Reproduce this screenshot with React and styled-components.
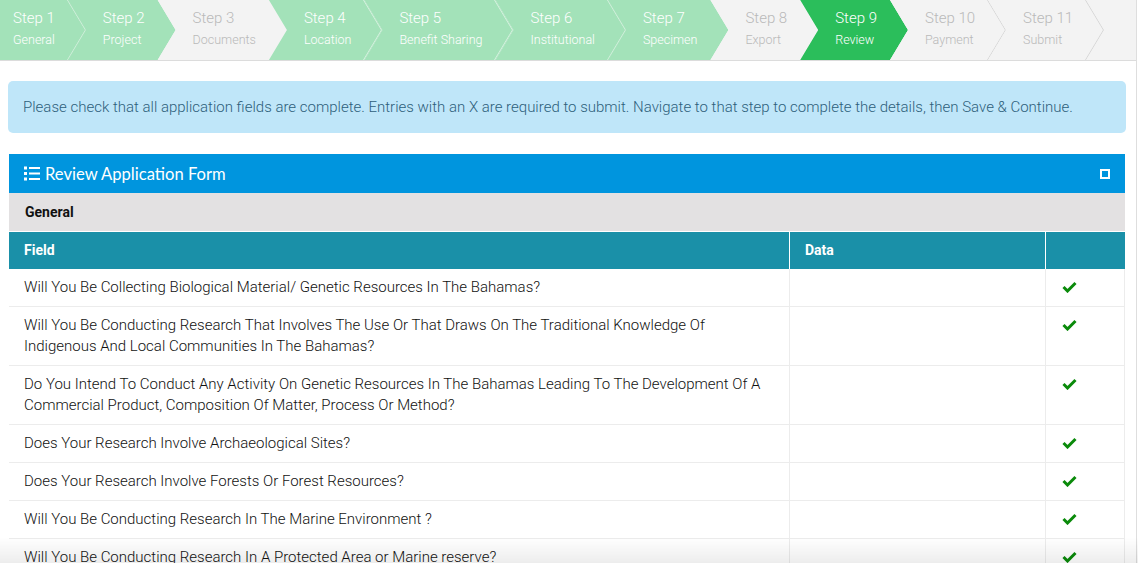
import React from "react";
import styled, { createGlobalStyle } from "styled-components";

const GlobalStyle = createGlobalStyle`
  html, body {
    margin: 0;
    padding: 0;
    background: #fff;
    font-family: Roboto, "Liberation Sans", Arial, sans-serif;
    overflow: hidden;
  }
  * { box-sizing: border-box; }
`;

const steps = [
  { title: "Step 1", label: "General", state: "done" },
  { title: "Step 2", label: "Project", state: "done" },
  { title: "Step 3", label: "Documents", state: "todo" },
  { title: "Step 4", label: "Location", state: "done" },
  { title: "Step 5", label: "Benefit Sharing", state: "done" },
  { title: "Step 6", label: "Institutional", state: "done" },
  { title: "Step 7", label: "Specimen", state: "done" },
  { title: "Step 8", label: "Export", state: "todo" },
  { title: "Step 9", label: "Review", state: "active" },
  { title: "Step 10", label: "Payment", state: "todo" },
  { title: "Step 11", label: "Submit", state: "todo" },
];

const rows = [
  ["Will You Be Collecting Biological Material/ Genetic Resources In The Bahamas?"],
  [
    "Will You Be Conducting Research That Involves The Use Or That Draws On The Traditional Knowledge Of",
    "Indigenous And Local Communities In The Bahamas?",
  ],
  [
    "Do You Intend To Conduct Any Activity On Genetic Resources In The Bahamas Leading To The Development Of A",
    "Commercial Product, Composition Of Matter, Process Or Method?",
  ],
  ["Does Your Research Involve Archaeological Sites?"],
  ["Does Your Research Involve Forests Or Forest Resources?"],
  ["Will You Be Conducting Research In The Marine Environment ?"],
  ["Will You Be Conducting Research In A Protected Area or Marine reserve?"],
];

const fills = { done: "#a3e2b9", todo: "#f3f3f3", active: "#2bbe5b" };
const inks = { done: "#ffffff", todo: "#b9b9b9", active: "#ffffff" };

const Page = styled.div`
  width: 1137px;
  min-height: 563px;
  border-right: 1px solid #dedede;
`;

const StepBar = styled.nav`
  display: flex;
  height: 61px;
  background: #f3f3f3;
  border-bottom: 1px solid #dcdcdc;
`;

const Step = styled.div`
  position: relative;
  height: 60px;
  flex: none;
  margin-left: ${(p) => (p.$first ? "0" : "-18px")};
  padding: 9px 31px 0 ${(p) => (p.$first ? "13px" : "35px")};
  background: ${(p) => fills[p.$state]};
  color: ${(p) => inks[p.$state]};
  font-weight: 300;
  clip-path: ${(p) =>
    p.$first
      ? "polygon(0 0, calc(100% - 18px) 0, 100% 50%, calc(100% - 18px) 100%, 0 100%)"
      : "polygon(0 0, calc(100% - 18px) 0, 100% 50%, calc(100% - 18px) 100%, 0 100%, 18px 50%)"};
  white-space: nowrap;
`;

const StepTitle = styled.div`
  font-size: 15px;
  line-height: 18px;
`;

const StepLabel = styled.div`
  font-size: 12.5px;
  line-height: 16px;
  margin-top: 5px;
`;

const Edge = styled.svg`
  position: absolute;
  top: 0;
  right: 0;
  width: 19px;
  height: 60px;
`;

const Content = styled.main`
  padding: 20px 10px 0 8px;
`;

const Alert = styled.div`
  background: #bfe6f9;
  border-radius: 5px;
  padding: 0 15px;
  height: 52px;
  display: flex;
  align-items: center;
  color: #2e5f7b;
  font-size: 15px;
  font-weight: 300;
`;

const Panel = styled.section`
  margin: 21px 1px 0 1px;
`;

const PanelHeader = styled.header`
  display: flex;
  align-items: center;
  height: 39px;
  padding: 0 15px 0 15px;
  background: #0095de;
  color: #fff;
`;

const PanelTitle = styled.h2`
  flex: 1;
  margin: 0 0 0 4px;
  font-family: Lato, Roboto, sans-serif;
  font-size: 16.6px;
  font-weight: 400;
`;

const Square = styled.span`
  width: 10px;
  height: 10px;
  border: 2px solid #fff;
  margin-top: 1px;
`;

const Section = styled.div`
  height: 38px;
  display: flex;
  align-items: center;
  padding: 0 16px;
  background: #e3e1e2;
  font-weight: 700;
  font-size: 14px;
  color: #111;
`;

const Table = styled.div`
  display: grid;
  grid-template-columns: 780px 256px 1fr;
`;

const HeadCell = styled.div`
  height: 38px;
  display: flex;
  align-items: center;
  padding: 0 15px 1px 15px;
  background: #1a90a8;
  color: #fff;
  font-weight: 700;
  font-size: 14px;
  border-top: 1px solid #fff;
  border-left: ${(p) => (p.$first ? "none" : "1px solid #fff")};
`;

const Cell = styled.div`
  padding: 8px 15px 8px 15px;
  font-size: 15px;
  font-weight: 300;
  line-height: 21px;
  color: #111;
  border-bottom: 1px solid #ececec;
  border-left: ${(p) => (p.$first ? "none" : "1px solid #ececec")};
  border-right: ${(p) => (p.$last ? "1px solid #ececec" : "none")};
`;

const Fade = styled.div`
  position: fixed;
  left: 0;
  right: 0;
  bottom: 0;
  height: 26px;
  pointer-events: none;
  background: linear-gradient(to bottom, rgba(0, 0, 0, 0), rgba(0, 0, 0, 0.07));
`;

const ListIcon = () => (
  <svg width="17" height="15" viewBox="0 0 17 15">
    <g fill="#fff">
      <rect x="0" y="0.5" width="3" height="3" />
      <rect x="0" y="6" width="3" height="3" />
      <rect x="0" y="11.5" width="3" height="3" />
      <rect x="5" y="1" width="11" height="2" />
      <rect x="5" y="6.5" width="11" height="2" />
      <rect x="5" y="12" width="11" height="2" />
    </g>
  </svg>
);

const Check = () => (
  <svg width="15" height="12" viewBox="0 0 15 12" style={{ display: "block", margin: "4px 0 0 1px" }}>
    <path d="M1.5 6 L5.5 10 L13.5 2" fill="none" stroke="#0a8a0a" strokeWidth="3" />
  </svg>
);

export default function App() {
  return (
    <Page>
      <GlobalStyle />
      <StepBar>
        {steps.map((s, i) => {
          const next = steps[i + 1];
          const showEdge = !next || next.state === s.state;
          return (
            <Step key={s.title} $state={s.state} $first={i === 0}>
              <StepTitle>{s.title}</StepTitle>
              <StepLabel>{s.label}</StepLabel>
              {showEdge && (
                <Edge viewBox="0 0 19 60">
                  <polyline
                    points="0.5,0 18.5,30 0.5,60"
                    fill="none"
                    stroke={s.state === "todo" ? "#d6d6d6" : "rgba(255,255,255,0.55)"}
                    strokeWidth="1"
                  />
                </Edge>
              )}
            </Step>
          );
        })}
      </StepBar>
      <Content>
        <Alert>
          Please check that all application fields are complete. Entries with an X are required to submit.
          Navigate to that step to complete the details, then Save &amp; Continue.
        </Alert>
        <Panel>
          <PanelHeader>
            <ListIcon />
            <PanelTitle>Review Application Form</PanelTitle>
            <Square />
          </PanelHeader>
          <Section>General</Section>
          <Table>
            <HeadCell $first>Field</HeadCell>
            <HeadCell>Data</HeadCell>
            <HeadCell />
            {rows.map((lines, i) => (
              <React.Fragment key={i}>
                <Cell $first>
                  {lines.map((l, j) => (
                    <div key={j}>{l}</div>
                  ))}
                </Cell>
                <Cell />
                <Cell $last>
                  <Check />
                </Cell>
              </React.Fragment>
            ))}
          </Table>
        </Panel>
      </Content>
      <Fade />
    </Page>
  );
}
